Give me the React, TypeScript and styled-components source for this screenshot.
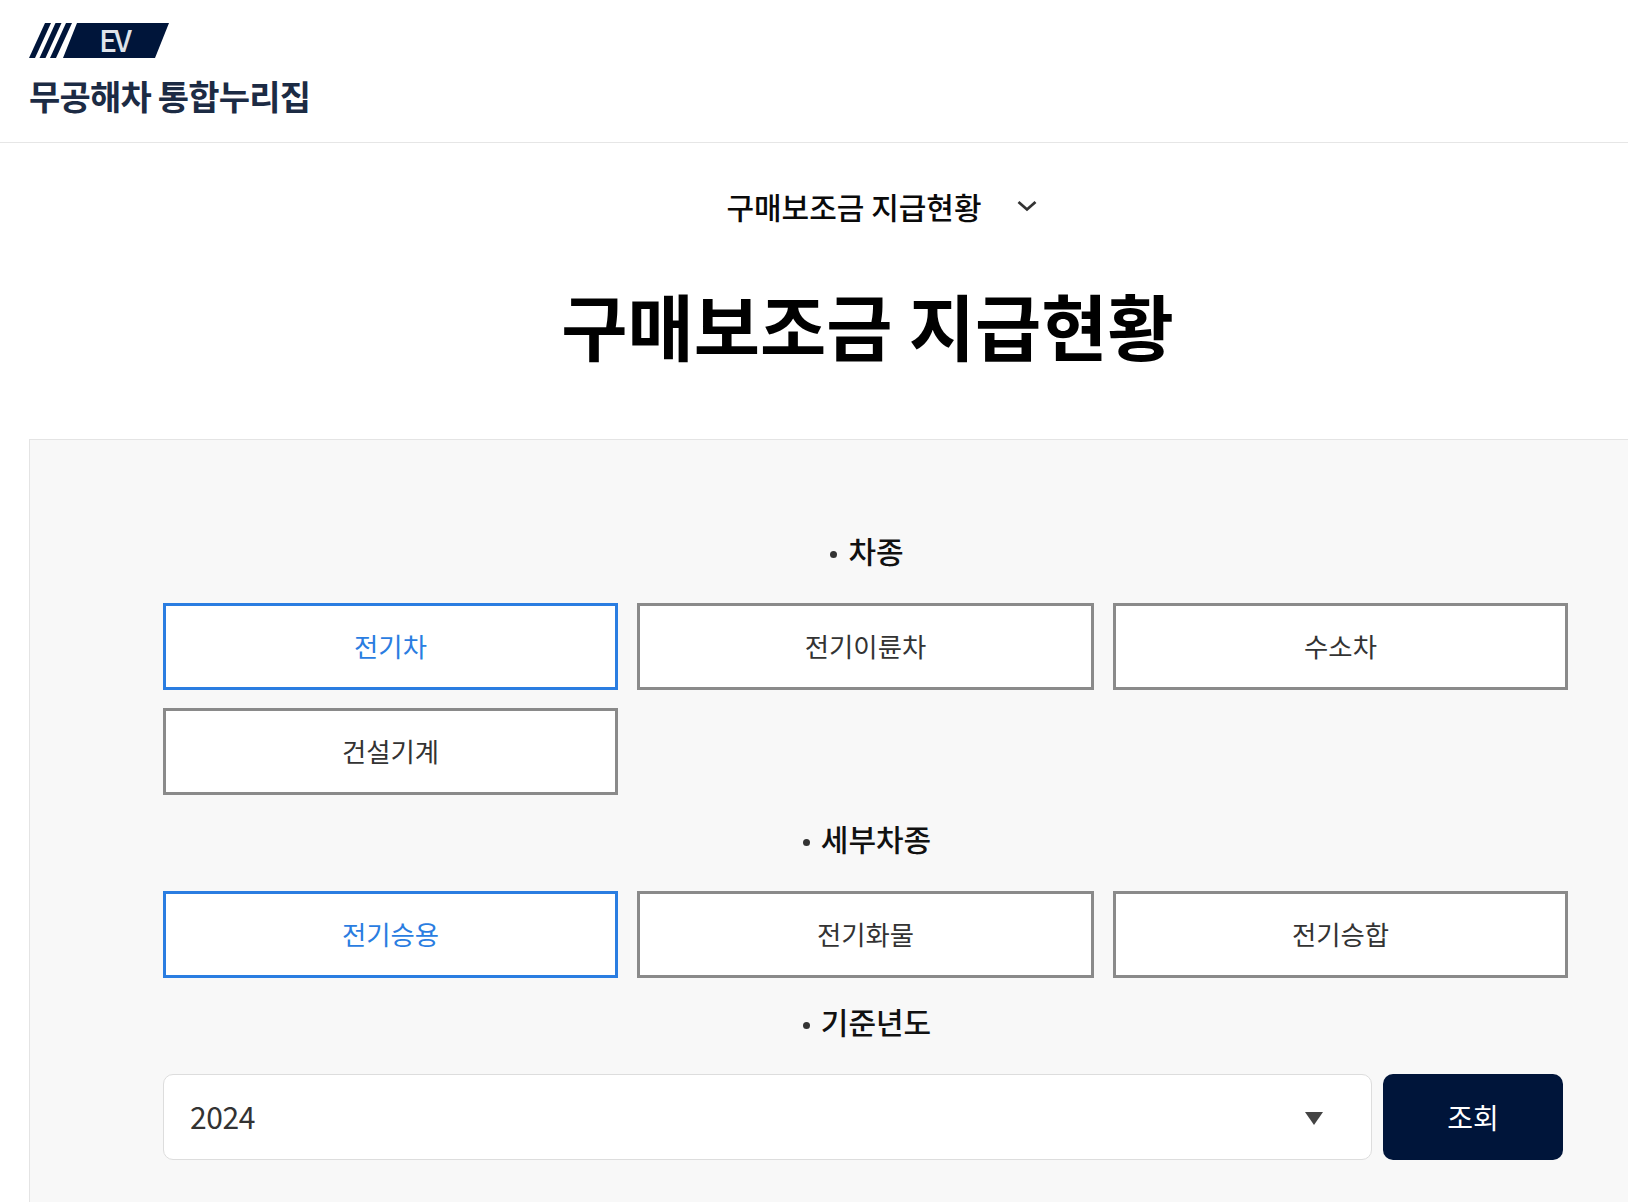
import styled, { createGlobalStyle } from 'styled-components';

const GlobalStyle = createGlobalStyle`
  html, body {
    margin: 0;
    padding: 0;
    background: #ffffff;
    overflow: hidden;
    height: 1202px;
  }
  body {
    font-family: 'Noto Sans CJK KR', 'Noto Sans', sans-serif;
    color: #222222;
  }
`;

const carTypes = [
  { label: '전기차', active: true },
  { label: '전기이륜차' },
  { label: '수소차' },
  { label: '건설기계' },
];

const subTypes = [
  { label: '전기승용', active: true },
  { label: '전기화물' },
  { label: '전기승합' },
];

function App() {
  return (
    <Page>
      <GlobalStyle />
      <Header>
        <Logo>
          <LogoMark>
            <svg width="140" height="35" viewBox="0 0 140 35" fill="#00153a">
              <polygon points="0,35 6,35 22,0 16,0" />
              <polygon points="10.5,35 16.5,35 32.5,0 26.5,0" />
              <polygon points="21,35 27,35 43,0 37,0" />
              <polygon points="34,35 126,35 140,0 48,0" />
            </svg>
            <LogoEv>EV</LogoEv>
          </LogoMark>
          <LogoText>무공해차 통합누리집</LogoText>
        </Logo>
      </Header>
      <Wrapper>
        <PageSelect>
          <span>구매보조금 지급현황</span>
          <svg width="20" height="12" viewBox="0 0 20 12" fill="none">
            <path d="M1.5 2l8.5 7.5L18.5 2" stroke="#333" strokeWidth="2.8" />
          </svg>
        </PageSelect>
        <Title>구매보조금 지급현황</Title>
        <Panel>
          <SectionLabel>차종</SectionLabel>
          <OptionGrid>
            {carTypes.map((item) => (
              <OptionButton key={item.label} $active={item.active}>
                {item.label}
              </OptionButton>
            ))}
          </OptionGrid>
          <SectionLabel>세부차종</SectionLabel>
          <OptionGrid>
            {subTypes.map((item) => (
              <OptionButton key={item.label} $active={item.active}>
                {item.label}
              </OptionButton>
            ))}
          </OptionGrid>
          <SectionLabel>기준년도</SectionLabel>
          <SearchRow>
            <YearSelect>
              <span>2024</span>
              <Caret />
            </YearSelect>
            <SearchButton>조회</SearchButton>
          </SearchRow>
        </Panel>
      </Wrapper>
    </Page>
  );
}
export default App;

const Page = styled.div`
  width: 1628px;
  height: 1202px;
  overflow: hidden;
`;

const Header = styled.header`
  box-sizing: border-box;
  height: 143px;
  padding: 23px 29px 0;
  border-bottom: 1px solid #e6e6e6;
`;

const Logo = styled.div`
  display: flex;
  flex-direction: column;
  align-items: flex-start;
  gap: 18px;
`;

const LogoMark = styled.div`
  position: relative;
  width: 140px;
  height: 35px;
  svg {
    display: block;
  }
`;

const LogoEv = styled.span`
  position: absolute;
  left: 70px;
  top: -1px;
  font-size: 30px;
  line-height: 35px;
  font-weight: 500;
  letter-spacing: -3px;
  color: #dfe3ea;
`;

const LogoText = styled.div`
  font-size: 34px;
  line-height: 40px;
  font-weight: 700;
  letter-spacing: -0.8px;
  color: #1c2b44;
`;

const Wrapper = styled.main`
  box-sizing: border-box;
  width: 1731px;
  padding: 0 29px;
`;

const PageSelect = styled.div`
  display: flex;
  justify-content: center;
  align-items: center;
  gap: 35px;
  height: 44px;
  margin-top: 41px;
  padding-left: 32px;
  font-size: 30px;
  font-weight: 500;
  color: #0a0a0a;
`;

const Title = styled.h1`
  margin: 46px 0 0;
  padding-left: 4px;
  text-align: center;
  font-size: 72px;
  line-height: 100px;
  font-weight: 700;
  color: #000000;
`;

const Panel = styled.section`
  box-sizing: border-box;
  margin-top: 65px;
  height: 800px;
  padding: 88px 133px 0;
  background: #f8f8f8;
  border: 1px solid #e4e4e4;
`;

const SectionLabel = styled.div`
  display: flex;
  justify-content: center;
  align-items: center;
  gap: 11px;
  height: 44px;
  padding-left: 3px;
  font-size: 30px;
  font-weight: 500;
  color: #111111;
  &::before {
    content: '';
    width: 7px;
    height: 7px;
    border-radius: 50%;
    background: #333333;
    margin-top: 8px;
  }
`;

const OptionGrid = styled.div`
  display: grid;
  grid-template-columns: 455px 457px 455px;
  gap: 18px 19px;
  margin: 31px 0 21px;
`;

const OptionButton = styled.button<{ $active?: boolean }>`
  height: 87px;
  padding: 0 0 2px;
  background: #ffffff;
  border: 3px solid ${(p) => (p.$active ? '#2a7de1' : '#8a8a8a')};
  font-family: inherit;
  font-size: 26.4px;
  color: ${(p) => (p.$active ? '#2a7de1' : '#333333')};
`;

const SearchRow = styled.div`
  display: flex;
  gap: 11px;
  margin-top: 31px;
`;

const YearSelect = styled.div`
  box-sizing: border-box;
  width: 1209px;
  height: 86px;
  display: flex;
  justify-content: space-between;
  align-items: center;
  padding: 0 48px 0 26px;
  background: #ffffff;
  border: 1px solid #dddddd;
  border-radius: 10px;
  font-size: 30px;
  letter-spacing: -0.4px;
  color: #333333;
  span {
    margin-top: -2px;
  }
`;

const Caret = styled.i`
  width: 0;
  height: 0;
  margin-top: 2px;
  border-left: 9px solid transparent;
  border-right: 9px solid transparent;
  border-top: 13px solid #444444;
`;

const SearchButton = styled.button`
  width: 180px;
  height: 86px;
  padding: 0;
  border: none;
  border-radius: 10px;
  background: #00153a;
  color: #ffffff;
  font-family: inherit;
  font-size: 28px;
`;
